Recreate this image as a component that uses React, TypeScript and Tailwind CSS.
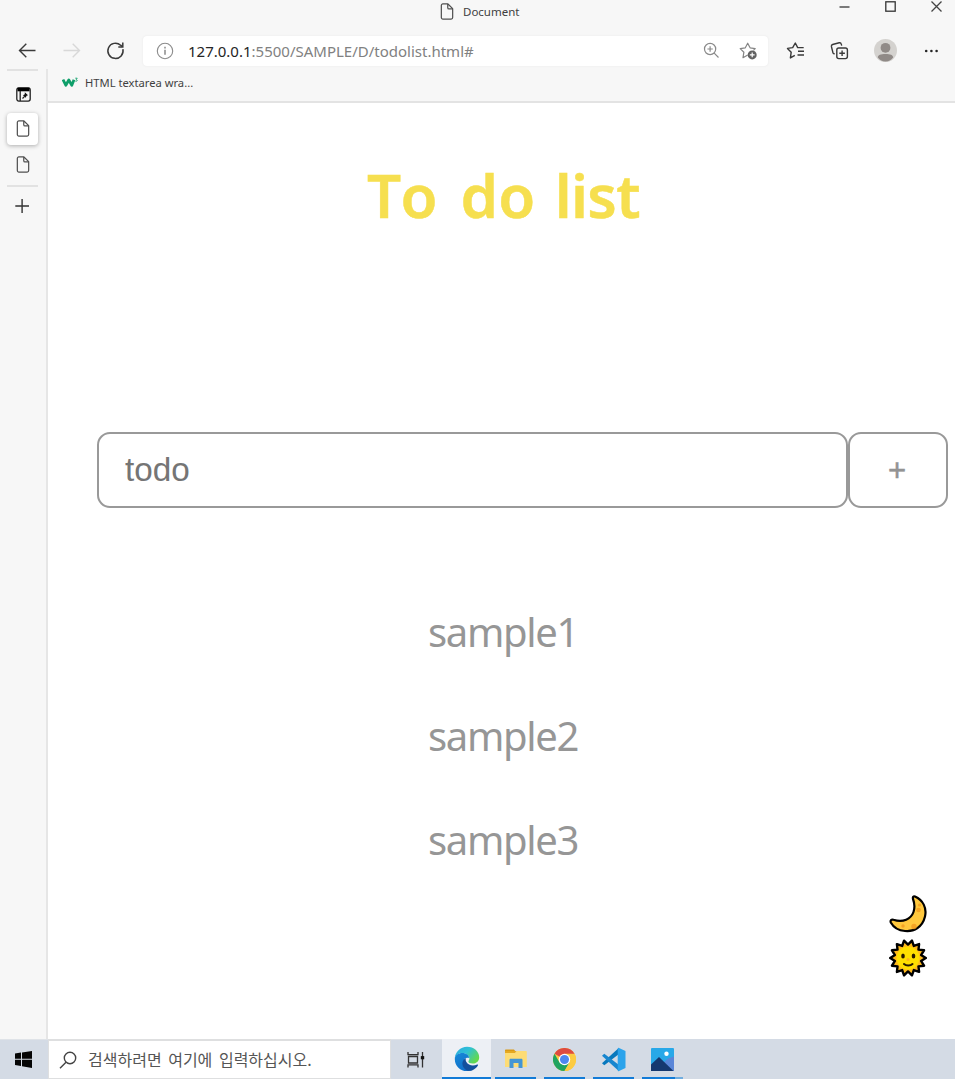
import type { ReactNode } from "react";
import clsx from "clsx";

const todos = ["sample1", "sample2", "sample3"];

function PageIcon({ className }: { className?: string }) {
  return (
    <svg viewBox="0 0 14 18" fill="none" stroke="#505050" strokeWidth="1.3" strokeLinejoin="round" className={clsx("h-[17px] w-[14px] shrink-0", className)}>
      <path d="M2.6 1H8l5 5v9.4c0 .9-.7 1.6-1.6 1.6H2.6C1.7 17 1 16.3 1 15.4V2.6C1 1.7 1.7 1 2.6 1Z" />
      <path d="M7.8 1v3.9c0 .8.5 1.3 1.3 1.3H13" />
    </svg>
  );
}

function TitleBar() {
  return (
    <div className="flex h-6 shrink-0 items-start pl-[440px]">
      <PageIcon className="mt-[3px]" />
      <span className="mt-[4px] ml-[9px] text-[11.5px] leading-4 text-[#3f3f3f]">Document</span>
      <div className="mt-[1px] ml-auto flex items-center gap-[35px] pr-[13px]">
        <svg viewBox="0 0 11 11" className="h-[11px] w-[11px]" stroke="#444" strokeWidth="1.4" fill="none">
          <path d="M.5 6h10" />
        </svg>
        <svg viewBox="0 0 11 11" className="h-[11px] w-[11px]" stroke="#333" strokeWidth="1.3" fill="none">
          <rect x=".8" y=".8" width="9.4" height="9.4" />
        </svg>
        <svg viewBox="0 0 11 11" className="h-[11px] w-[11px]" stroke="#444" strokeWidth="1.3" fill="none">
          <path d="m.5.5 10 10M10.5.5l-10 10" />
        </svg>
      </div>
    </div>
  );
}

function Toolbar() {
  return (
    <div className="flex h-[45px] shrink-0 items-center pt-[8px] pl-[18px]">
      <svg viewBox="0 0 18 18" className="h-[18px] w-[18px] shrink-0" fill="none" stroke="#3a3a3a" strokeWidth="1.4">
        <path d="M17.500 8.500H1.800M8.300 1.700 1.500 8.500l6.800 6.800" />
      </svg>
      <svg viewBox="0 0 18 18" className="ml-[27px] h-[18px] w-[18px] shrink-0" fill="none" stroke="#d8d8d8" strokeWidth="1.4">
        <path d="M.5 8.500h15.700M9.700 1.700 16.500 8.500l-6.800 6.800" />
      </svg>
      <svg viewBox="0 0 19 19" className="ml-[25px] h-[19px] w-[19px] shrink-0" fill="none" stroke="#3a3a3a" strokeWidth="1.5">
        <path d="M16.900 8.200A7.600 7.600 0 1 1 14.600 4.200L16.400 5.700" />
        <path d="M16.800 1.500v4.500h-4.500" />
      </svg>
      <div className="ml-[18px] flex h-[30px] w-[625px] shrink-0 items-center rounded-[4px] bg-white pr-[9px] pl-[13px] shadow-[0_0_2px_#e6e6e6]">
        <svg viewBox="0 0 18 18" className="h-[18px] w-[18px]" fill="none" stroke="#8b8b8b" strokeWidth="1.1">
          <circle cx="9" cy="9" r="7.7" />
          <path d="M9 7.800v5M9 4.800v1.600" strokeWidth="1.5" />
        </svg>
        <span className="ml-[14px] text-[15px] leading-5 text-[#818181]">
          <span className="text-[#252525]">127.0.0.1</span>:5500/SAMPLE/D/todolist.html#
        </span>
        <svg viewBox="0 0 17 17" className="ml-auto h-[17px] w-[17px]" fill="none" stroke="#8a8a8a" strokeWidth="1.2">
          <circle cx="7.1" cy="7" r="5.6" />
          <path d="m11.200 11.200 4.300 4.300M7.100 4.300v5.400M4.400 7h5.400" />
        </svg>
        <svg viewBox="0 0 20 18" className="ml-[19px] h-[18px] w-[20px]" fill="none" stroke="#858585" strokeWidth="1.2" strokeLinejoin="round">
          <path d="m8.700 13-4.700 2.700.9-5.500L1.200 6.600l5.100-.8L8.700 1.200l2.400 4.600 5.100.8-1.700 1.700" />
          <circle cx="13.2" cy="12.9" r="4.500" fill="#626262" stroke="none" />
          <path d="M13.200 10.500v4.800M10.800 12.900h4.800" stroke="#fff" />
        </svg>
      </div>
      <svg viewBox="0 0 19 19" className="ml-[18px] h-[19px] w-[19px] shrink-0" fill="none" stroke="#3a3a3a" strokeWidth="1.4" strokeLinejoin="round">
        <path d="m8.800 14.300-4.400 2.600.8-5.700L1.500 7.400l5.200-.8L9.300 2l2.400 4.600h6" />
        <path d="M12 10.300h6M11.500 14h6.500" />
      </svg>
      <svg viewBox="0 0 19 19" className="ml-[25px] h-[19px] w-[19px] shrink-0" fill="none" stroke="#3a3a3a" strokeWidth="1.4" strokeLinejoin="round">
        <rect x="6.8" y="7" width="10.600" height="10.600" rx="2" />
        <path d="M12.100 9.500v5.600M9.300 12.300h5.600M4.600 13.200l-.8-.5c-.6-.3-.8-.8-1-1.500L1.400 5.500c-.2-1 .2-1.700 1.200-2l6.600-1.700c1-.2 1.800.2 2 1.100l.5 1.700" />
      </svg>
      <svg viewBox="0 0 23 23" className="ml-[25px] h-[23px] w-[23px] shrink-0">
        <circle cx="11.5" cy="11.5" r="11.5" fill="#d4d2cf" />
        <circle cx="11.5" cy="8.8" r="4.9" fill="#908a87" />
        <path d="M3.800 18.500c0-2.500 3-3.500 7.700-3.500s7.700 1 7.700 3.500c-2 2.500-4.600 4-7.700 4s-5.700-1.500-7.700-4Z" fill="#908a87" />
      </svg>
      <svg viewBox="0 0 15 4" className="ml-[27px] h-[4px] w-[15px] shrink-0" fill="#262626">
        <circle cx="2.2" cy="2" r="1.3" />
        <circle cx="7.4" cy="2" r="1.3" />
        <circle cx="12.6" cy="2" r="1.3" />
      </svg>
    </div>
  );
}

function TabRail() {
  return (
    <aside className="flex w-[48px] shrink-0 flex-col border-r-2 border-[#e6e6e6] pl-[7px]">
      <div className="h-[2px] w-[31px] bg-[#e2e2e2]" />
      <svg viewBox="0 0 15 15" className="mt-[16px] ml-[9px] h-[15px] w-[15px]" fill="none" stroke="#222" strokeWidth="1.3">
        <rect x=".8" y=".9" width="13.4" height="13.2" rx="2" />
        <path d="M1.500 2.500h12" strokeWidth="3.600" stroke="#000" />
        <path d="M4.200 4v10" />
        <path d="M6.500 11.500 8.600 9.300" strokeWidth="1.200" />
        <path d="m8.800 5.300 3.200 2.900-1.400.5-1 2-2.600-2.500 1.800-.9Z" fill="#111" stroke="none" />
      </svg>
      <div className="mt-[11px] flex h-[32px] w-[31px] items-start justify-center rounded-[4px] bg-white pt-[7px] shadow-[0_1px_4px_rgba(0,0,0,0.3)]">
        <PageIcon />
      </div>
      <PageIcon className="mt-[11px] ml-[9px]" />
      <div className="mt-[12px] h-[2px] w-[31px] bg-[#e2e2e2]" />
      <svg viewBox="0 0 15 15" className="mt-[12px] ml-[8px] h-[15px] w-[15px]" stroke="#333" strokeWidth="1.4">
        <path d="M.3 7H14M7.100 0v14" />
      </svg>
    </aside>
  );
}

function BookmarkBar() {
  return (
    <div className="flex h-[34px] shrink-0 items-start border-b-2 border-[#e3e3e3] bg-[#f7f7f7] pl-[14px]">
      <svg viewBox="0 0 17 12" className="mt-[8px] h-[12px] w-[17px]" fill="none" stroke="#0f9f6a">
        <path d="m1 2.500 2.800 5.700L6.800 3l3 5.200L12 2.700" strokeWidth="2.800" strokeLinejoin="round" />
        <path d="M13.300 1.200h1.900l-1 1.500c1.500 0 1.300 2-.8 1.500" strokeWidth=".9" />
      </svg>
      <span className="mt-[6px] ml-[6px] text-[11.2px] leading-4 text-[#3f3f3f]">HTML textarea wra...</span>
    </div>
  );
}

function Moon() {
  return (
    <svg viewBox="0 0 38 38" className="h-[38px] w-[38px]">
      <path d="M26 1.500C34 5 38 13 36 21.500 33.500 32 25 37 16 36 9 35.500 4 31.500 1.800 27.500 1 25.500 2.500 24 4.500 24.800 14 28 22 24 24.500 17 26 12.500 25.500 8 24 4 23.500 2 24.500 1 26 1.500Z" fill="#ffc83d" stroke="#000" strokeWidth="2.200" strokeLinejoin="round" />
      <g fill="#f19a20" opacity=".8">
        <circle cx="30.500" cy="10" r="1.600" />
        <circle cx="29.500" cy="15" r="2.300" />
        <circle cx="25" cy="31.500" r="2.700" />
        <circle cx="14" cy="31" r="1.700" />
      </g>
    </svg>
  );
}

function Sun() {
  // 14 rays, alternating outer and inner radius
  const points = Array.from({ length: 28 }, (_, i) => {
    const radius = i % 2 ? 17.8 : 13.4;
    const angle = (i * Math.PI) / 14 - Math.PI / 2;
    return `${19 + radius * Math.cos(angle)},${19 + radius * Math.sin(angle)}`;
  }).join(" ");
  return (
    <svg viewBox="0 0 38 38" className="h-[38px] w-[38px]">
      <polygon points={points} fill="#ffb91d" stroke="#000" strokeWidth="2.4" strokeLinejoin="round" />
      <circle cx="19" cy="19" r="11.5" fill="#ffdf00" />
      <ellipse cx="14" cy="17" rx="1.8" ry="2.6" fill="#2a1a00" />
      <ellipse cx="24.5" cy="17" rx="1.8" ry="2.6" fill="#2a1a00" />
      <circle cx="19" cy="20.5" r="1.6" fill="#ffb51d" />
      <path d="M15 25c2 2 6.500 2 8.500 0" fill="none" stroke="#2a1a00" strokeWidth="2" strokeLinecap="round" />
    </svg>
  );
}

function TodoPage() {
  return (
    <main className="relative flex-1 bg-white">
      <h1 className="pt-[52px] pl-[319px] text-[60px] leading-[80px] font-semibold whitespace-nowrap text-[#f6df4f] [word-spacing:4px] [-webkit-text-stroke:0.5px_#f6df4f]">
        <span className="tracking-[3.5px]">To</span> do <span className="tracking-[-0.7px]">list</span>
      </h1>
      <form className="mt-[197px] ml-[49px] flex">
        <input
          placeholder="todo"
          className="h-[76px] w-[751px] rounded-[13px] border-2 border-[#999] pl-[26px] font-['Liberation_Sans',sans-serif] text-[33.3px] outline-none placeholder:text-[#757575]"
        />
        <button
          type="button"
          className="h-[76px] w-[100px] rounded-[13px] border-2 border-[#999] pr-[2px] font-['Liberation_Sans',sans-serif] text-[31px] leading-none text-[#939393] [-webkit-text-stroke:0.5px_#939393]"
        >
          +
        </button>
      </form>
      <ul className="mt-[72px] ml-[380px] text-[40px] tracking-[-1.35px] text-[#969696]">
        {todos.map((todo) => (
          <li key={todo} className="flex h-[104px] items-center">
            {todo}
          </li>
        ))}
      </ul>
      <div className="absolute right-[28px] bottom-[62px] flex flex-col gap-[6px]">
        <Moon />
        <Sun />
      </div>
    </main>
  );
}

function TaskButton({ active, underline, children }: { active?: boolean; underline: ReactNode; children: ReactNode }) {
  return (
    <div className={clsx("flex h-full w-[49px] flex-col items-center", active && "bg-[#edf0f5]")}>
      <div className="flex flex-1 items-center pt-[2px]">{children}</div>
      {underline}
    </div>
  );
}

function Taskbar() {
  const line = <div className="h-[2px] w-[41px] bg-[#127bd7]" />;
  return (
    <footer className="flex h-[40px] shrink-0 bg-[#d4dbe5]">
      <div className="flex w-[48px] items-center border-t border-[#dfe3e8] pl-[15px]">
        <svg viewBox="0 0 17 17" className="h-[17px] w-[17px]" fill="#050505">
          <path d="M0 2.500 6 1.600v6.200H0ZM7 1.400 17 0v7.800H7ZM0 8.800h6V15l-6-.9ZM7 8.800h10V17L7 15.300Z" />
        </svg>
      </div>
      <div className="flex w-[343px] items-center border border-t-2 border-[#dedfe0] bg-white pl-[10px]">
        <svg viewBox="0 0 18 18" className="h-[18px] w-[18px]" fill="none" stroke="#444" strokeWidth="1.4">
          <circle cx="11" cy="7" r="5.7" />
          <path d="m7 11.200-6 6" />
        </svg>
        <span className="-mt-[2px] ml-[11px] font-['Noto_Sans_CJK_KR',sans-serif] text-[16px] leading-5 text-[#555] [word-spacing:3px]">검색하려면 여기에 입력하십시오.</span>
      </div>
      <div className="flex w-[51px] items-center border-t border-[#dfe3e8] pl-[16px]">
        <svg viewBox="0 0 18 18" className="h-[18px] w-[18px]" fill="none" stroke="#333" strokeWidth="1.3">
          <path d="M1 1v2.700h10V1M1 16.500v-2.700h10v2.700M1.500 5.500h9v6.500h-9ZM15.500 1v15.500" />
          <path d="M13.800 6.700h3.400" strokeWidth="3.2" stroke="#111" />
        </svg>
      </div>
      <TaskButton active underline={<div className="h-[2px] w-[49px] bg-[#127bd7]" />}>
        <svg viewBox="0 0 26 26" className="h-[26px] w-[26px]">
          <defs>
            <linearGradient id="edgeTop" x1="0" y1="0" x2="1" y2=".6">
              <stop offset="0" stopColor="#29a9e1" />
              <stop offset=".5" stopColor="#2fc1d5" />
              <stop offset="1" stopColor="#63d94c" />
            </linearGradient>
            <linearGradient id="edgeLeft" x1="0" y1="0" x2=".5" y2="1">
              <stop offset="0" stopColor="#1689d8" />
              <stop offset="1" stopColor="#1170c9" />
            </linearGradient>
          </defs>
          <path d="M.8 12.500C1 6 6.500.8 13 .8c7 0 12.200 4.800 12.200 10.400 0 4-3 6.300-6.500 6.300-3 0-4.300-1-4.300-2 0-.8 1-1.200 1-3C15.400 9.500 12 7 8.300 7 4 7 1.500 9.500.8 12.500Z" fill="url(#edgeTop)" />
          <path d="M.8 13C1 9 4.500 7 8.300 7c4.200 0 6.700 2.500 7 5-5-1.500-6.800 3-4.600 6.700 1.800 3 5.300 5.500 8.300 4.700-8 4.600-18.200-.5-18.200-10.400Z" fill="url(#edgeLeft)" />
          <path d="M12.200 11.900c-3.700 1.300-5.200 6.300-2.200 10 2 2.600 5.200 3.500 8 2.500 2.600-1 4.800-2.800 6-5.200.3-.6-.2-.9-.8-.6-4.200 2-9 .8-10.800-2.500-.8-1.400-1-3-.2-4.200Z" fill="#13509d" />
        </svg>
      </TaskButton>
      <TaskButton underline={line}>
        <svg viewBox="0 0 22 20" className="h-[20px] w-[22px]">
          <path d="M0 1.500C0 .8.400.5 1 .5h8l1.500 2H0Z" fill="#d99a16" />
          <path d="M0 4h10l1.500-2h9.300c.6 0 1 .3 1 1v15H0Z" fill="#fddc75" />
          <path d="M0 4h10l1.500-2H0Z" fill="#e6a920" />
          <path d="M4.500 19v-8c0-.8.500-1.200 1.200-1.200h10.600c.7 0 1.200.4 1.200 1.200v8h-4v-5h-5v5Z" fill="#4395d4" />
        </svg>
      </TaskButton>
      <TaskButton underline={line}>
        <svg viewBox="0 0 24 24" className="h-[23px] w-[23px]">
          <circle cx="12" cy="12" r="12" fill="#fccb42" />
          <path d="M12 12 1.600 6A12 12 0 0 1 22.400 6Z" fill="#de4b40" />
          <path d="M1.600 6A12 12 0 0 0 12 24l5.200-9L12 12 6.800 15Z" fill="#20a35f" />
          <path d="M12 6h10.400A12 12 0 0 1 12 24l5.200-9Z" fill="#fccb42" />
          <circle cx="12" cy="12" r="6" fill="#fff" />
          <circle cx="12" cy="12" r="4.7" fill="#4d87ef" />
        </svg>
      </TaskButton>
      <TaskButton underline={line}>
        <svg viewBox="0 0 25 25" className="h-[25px] w-[25px]">
          <path d="M18 .8 1 16.200l2.300 2L18 7Z" fill="#0878bd" />
          <path d="M18 24.200 1 8.800l2.300-2L18 18Z" fill="#1686cf" />
          <path d="M17.500.8 24.500 4v17l-7 3.300c-.5-.2-.8-.5-.8-1V2c0-.6.3-1 .8-1.200Z" fill="#2ba3eb" />
        </svg>
      </TaskButton>
      <TaskButton
        underline={
          <div className="flex h-[2px] w-[41px]">
            <div className="w-[33px] bg-[#127bd7]" />
            <div className="w-[8px] bg-[#70addf]" />
          </div>
        }
      >
        <svg viewBox="0 0 23 23" className="h-[23px] w-[23px]">
          <rect width="23" height="23" rx="1" fill="#28a8e8" />
          <path d="M12 23V15l5-4.500 6-2V23Z" fill="#5a86d8" />
          <path d="M0 16.500 8 9l14.500 14H0Z" fill="#15386f" />
          <circle cx="15.5" cy="5.7" r="2.2" fill="#fff" />
        </svg>
      </TaskButton>
    </footer>
  );
}

export default function App() {
  return (
    <div className="flex h-[1079px] w-[955px] flex-col overflow-hidden bg-[#f7f7f7] font-['Noto_Sans','Open_Sans',sans-serif]">
      <TitleBar />
      <Toolbar />
      <div className="flex min-h-0 flex-1">
        <TabRail />
        <div className="flex flex-1 flex-col">
          <BookmarkBar />
          <TodoPage />
        </div>
      </div>
      <Taskbar />
    </div>
  );
}
